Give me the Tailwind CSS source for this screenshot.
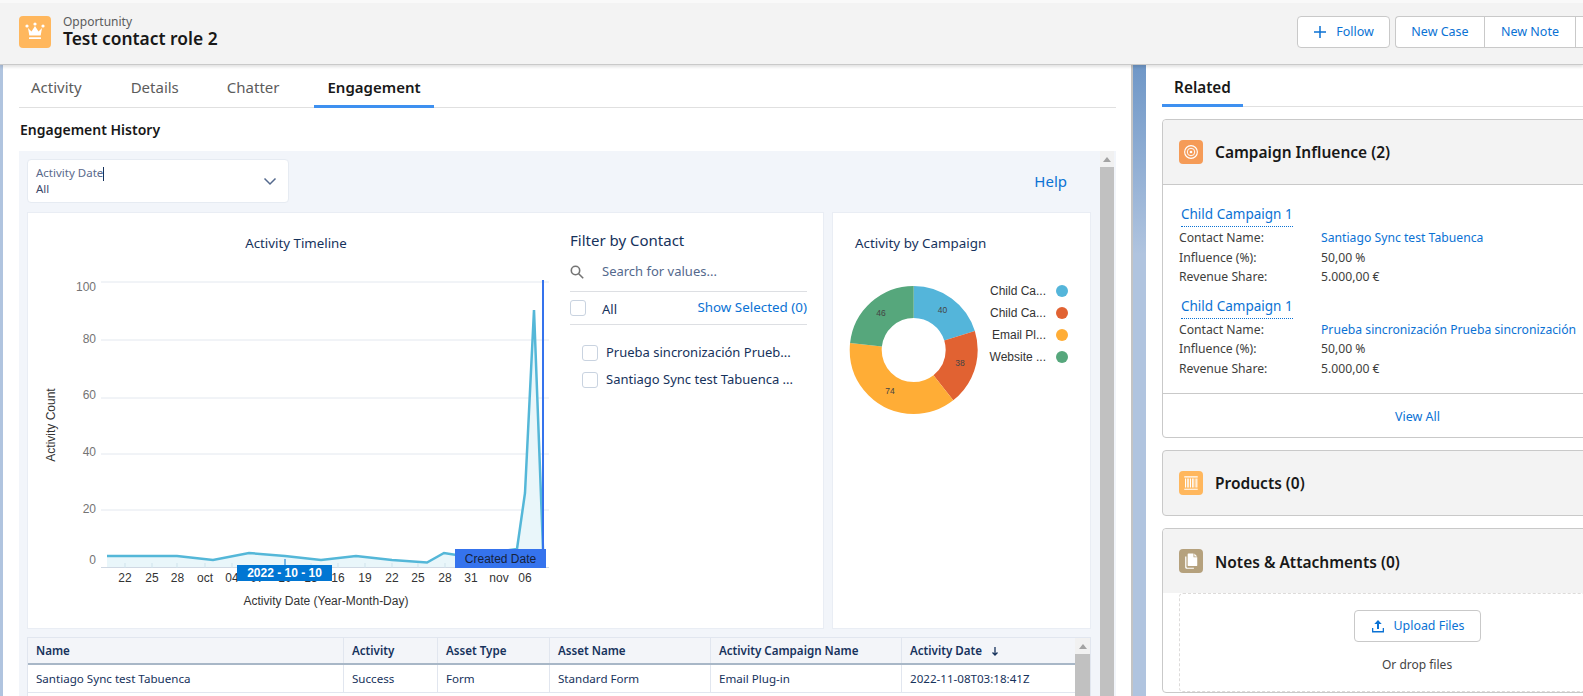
<!DOCTYPE html>
<html>
<head>
<meta charset="utf-8">
<script src="https://cdn.jsdelivr.net/npm/@tailwindcss/browser@4"></script>
</head>
<body class="m-0">
<div class="w-[1583px] h-[696px] overflow-hidden flex flex-col relative bg-[#b0c4df] font-['Noto_Sans',sans-serif] text-[#181818]">
  <!-- Page header -->
  <header class="h-[65px] shrink-0 bg-[#f3f3f3] border-b border-[#c9c9c9] shadow-[inset_0_3px_0_#f9f9f9,0_2px_3px_rgba(0,0,0,0.12)] flex items-center pl-[19px] relative z-10">
    <div class="w-8 h-8 rounded-[4px] bg-[#ffb75d] flex items-center justify-center">
      <svg viewBox="0 0 24 24" class="w-[24px] h-[24px]" fill="#fff"><circle cx="4" cy="6" r="1.6"/><circle cx="12" cy="4" r="1.6"/><circle cx="20" cy="6" r="1.6"/><path d="M5 8l3.5 3.5L12 6l3.5 5.500L19 8l-1.300 7.500H6.300z"/><rect x="6" y="17.300" width="12" height="1.800" rx=".5"/></svg>
    </div>
    <div class="ml-3 mb-[2px] flex flex-col">
      <span class="text-[12px] leading-[16px] text-[#5c5c5c]">Opportunity</span>
      <span class="-mt-[2px] text-[17.4px] leading-[20px] font-semibold">Test contact role 2</span>
    </div>
    <div class="ml-auto -mr-[12px] flex items-center gap-[5px]">
      <button class="w-[93px] h-8 rounded-[4px] bg-white border border-[#c9c9c9] text-[12.500px] text-[#0b72d4] flex items-center justify-center gap-[9px]">
        <svg viewBox="0 0 14 14" class="w-[14px] h-[14px]" stroke="#0b72d4" stroke-width="1.500" fill="none"><path d="M7 1v12M1 7h12"/></svg>Follow
      </button>
      <div class="w-[200px] h-8 rounded-l-[4px] bg-white border border-r-0 border-[#c9c9c9] flex text-[12.500px] text-[#0b72d4]">
        <span class="w-[89px] shrink-0 border-r border-[#c9c9c9] flex items-center justify-center">New Case</span>
        <span class="w-[91px] shrink-0 border-r border-[#c9c9c9] flex items-center justify-center">New Note</span>
      </div>
    </div>
  </header>

  <div class="flex flex-1 min-h-0">
    <!-- Left column -->
    <div class="ml-[3px] w-[1130px] shrink-0 bg-white border-r-2 border-[#c4c4c4] pl-4 flex flex-col min-h-0">
      <nav class="h-[43px] w-[1097px] shrink-0 border-b border-[#e0e0e0] flex text-[15px] text-[#5c5c5c]">
        <span class="ml-3 h-[43px] pt-[2px] flex items-center">Activity</span>
        <span class="ml-[49px] h-[43px] pt-[2px] flex items-center">Details</span>
        <span class="ml-12 h-[43px] pt-[2px] flex items-center">Chatter</span>
        <span class="ml-[35px] h-[43px] pt-[5px] px-[13px] flex items-center font-semibold text-[#181818] border-b-[3px] border-[#3e90f0]">Engagement</span>
      </nav>
      <h2 class="h-[43px] shrink-0 flex items-center text-[14px] font-semibold pl-px">Engagement History</h2>
      <section class="flex flex-1 min-h-0 bg-[#f2f5fa] w-[1097px] overflow-hidden">
        <div class="w-[1081px] shrink-0 pl-[8px]">
          <div class="h-[61px] pt-[8px] pr-[9px] flex justify-between">
            <div class="w-[262px] h-[44px] bg-white rounded-[4px] border border-[#e6ebf2] pl-[8px] pr-[11px] flex items-center justify-between">
              <div class="flex flex-col text-[11.500px] leading-[16px]">
                <span class="text-[#5a6a8c]">Activity Date<span class="inline-block w-px h-[14px] bg-[#16325c] align-middle"></span></span>
                <span class="text-[#3c4a6a]">All</span>
              </div>
              <svg viewBox="0 0 14 14" class="w-[14px] h-[14px]" fill="none" stroke="#54698d" stroke-width="1.500"><path d="M1.500 4.500 7 10l5.500-5.500"/></svg>
            </div>
            <a class="text-[15px] text-[#0b72d4] mr-[24px] mt-[11px] h-[22px] leading-[22px]">Help</a>
          </div>
          <div class="flex gap-2 h-[417px] pr-[9px]">
            <div class="w-[797px] bg-white border border-[#e9edf4] flex">
              <svg viewBox="28 213 531 415" class="w-[531px] h-[415px] shrink-0 font-['Liberation_Sans',sans-serif]">
                <text x="296" y="248" font-size="13.300" fill="#16325c" text-anchor="middle" font-family="Noto Sans">Activity Timeline</text>
                <g stroke="#e3e8ef" stroke-width="1">
                  <path d="M101 282h448M101 340h448M101 398h448M101 454h448M101 510h448"/>
                </g>
                <path d="M101 567.500h448" stroke="#cfd8e3"/>
                <g fill="#747474" font-size="12" text-anchor="end">
                  <text x="96" y="291">100</text><text x="96" y="343">80</text><text x="96" y="399">60</text><text x="96" y="456">40</text><text x="96" y="513">20</text><text x="96" y="564">0</text>
                </g>
                <text transform="translate(55 425) rotate(-90)" font-size="12" fill="#333" text-anchor="middle">Activity Count</text>
                <path d="M107 556 177 556 213 560 249 553 285 556 321 560 356 556 392 560 427 562.500 444 553 463 556 517 549 525 493 534 310 543 549V567H107Z" fill="#e9f6fa"/>
                <path d="M107 556 177 556 213 560 249 553 285 556 321 560 356 556 392 560 427 562.500 444 553 463 556 517 549 525 493 534 310 543 549" fill="none" stroke="#54b7d8" stroke-width="2.500"/>
                <path d="M125 563v5M152 563v5M177 563v5M205 563v5M232 563v5M311 563v5M338 563v5M365 563v5M392 563v5M418 563v5M445 563v5" stroke="#cfe3ec"/>
                <g fill="#333" font-size="12" text-anchor="middle">
                  <text x="125" y="582">22</text><text x="152" y="582">25</text><text x="177.500" y="582">28</text><text x="205" y="582">oct</text><text x="232" y="582">04</text><text x="257" y="582">07</text><text x="285" y="582">10</text><text x="311" y="582">13</text><text x="338" y="582">16</text><text x="365" y="582">19</text><text x="392" y="582">22</text><text x="418" y="582">25</text><text x="445" y="582">28</text><text x="471" y="582">31</text><text x="499" y="582">nov</text><text x="525" y="582">06</text>
                </g>
                <text x="326" y="605" font-size="12" fill="#333" text-anchor="middle">Activity Date (Year-Month-Day)</text>
                <rect x="542" y="280" width="2" height="270" fill="#3573ed"/>
                <rect x="455" y="549" width="91" height="19" fill="#3573ed"/>
                <text x="500.500" y="563" font-size="12" fill="#16223c" text-anchor="middle">Created Date</text>
                <rect x="284.500" y="559" width="1" height="6" fill="#0176d3"/>
                <rect x="237" y="565" width="95" height="16" fill="#0176d3"/>
                <text x="284.500" y="577" font-size="12" font-weight="700" fill="#fff" text-anchor="middle">2022 - 10 - 10</text>
              </svg>
              <div class="w-[237px] ml-[11px] flex flex-col">
                <h3 class="mt-4 text-[15px] leading-[22px] text-[#16325c]">Filter by Contact</h3>
                <div class="h-[41px] pt-[1px] border-b border-[#dddfe3] flex items-center text-[13px] text-[#54698d]">
                  <svg viewBox="0 0 14 14" class="w-[14px] h-[14px]" fill="none" stroke="#747474" stroke-width="1.600"><circle cx="5.500" cy="5.500" r="4.200"/><path d="m8.700 8.700 4.500 4.500"/></svg>
                  <span class="ml-[18px]">Search for values...</span>
                </div>
                <div class="h-[33px] border-b border-[#dddfe3] flex items-center text-[13px]">
                  <span class="w-4 h-4 rounded-[3px] border border-[#c9d3e0] bg-white"></span>
                  <span class="ml-4 mt-[3px] text-[#16325c]">All</span>
                  <a class="ml-auto text-[13.400px] text-[#0b72d4] -mt-[2px]">Show Selected (0)</a>
                </div>
                <div class="mt-[14px] pl-3 flex flex-col text-[13px] text-[#16325c]">
                  <div class="h-[27px] flex items-center"><span class="w-4 h-4 shrink-0 rounded-[3px] border border-[#c9d3e0] bg-white"></span><span class="ml-2 whitespace-nowrap">Prueba sincronización Prueb...</span></div>
                  <div class="h-[27px] flex items-center"><span class="w-4 h-4 shrink-0 rounded-[3px] border border-[#c9d3e0] bg-white"></span><span class="ml-2 whitespace-nowrap">Santiago Sync test Tabuenca ...</span></div>
                </div>
              </div>
            </div>
            <div class="w-[259px] bg-white border border-[#e9edf4]">
              <svg viewBox="832 213 257 415" class="w-[257px] h-[415px] font-['Liberation_Sans',sans-serif]">
                <text x="854" y="248" font-size="13.400" fill="#16325c" font-family="Noto Sans">Activity by Campaign</text>
                <g fill="none" stroke-width="32" transform="rotate(-90 912.700 350)">
                  <circle cx="912.700" cy="350" r="48" pathLength="198" stroke="#54b5da" stroke-dasharray="40 158"/>
                  <circle cx="912.700" cy="350" r="48" pathLength="198" stroke="#e16232" stroke-dasharray="38 160" stroke-dashoffset="-40"/>
                  <circle cx="912.700" cy="350" r="48" pathLength="198" stroke="#ffad36" stroke-dasharray="74 124" stroke-dashoffset="-78"/>
                  <circle cx="912.700" cy="350" r="48" pathLength="198" stroke="#56a77c" stroke-dasharray="46 152" stroke-dashoffset="-152"/>
                </g>
                <g font-size="8.500" fill="#444" text-anchor="middle">
                  <text x="941.600" y="313">40</text><text x="959" y="366">38</text><text x="889" y="394">74</text><text x="880" y="316">46</text>
                </g>
                <g font-size="12" fill="#333" text-anchor="end">
                  <text x="1045" y="295">Child Ca...</text><text x="1045" y="317">Child Ca...</text><text x="1045" y="339">Email Pl...</text><text x="1045" y="361">Website ...</text>
                </g>
                <circle cx="1061" cy="291" r="6" fill="#54b5da"/><circle cx="1061" cy="313" r="6" fill="#e16232"/><circle cx="1061" cy="335" r="6" fill="#ffad36"/><circle cx="1061" cy="357" r="6" fill="#56a77c"/>
              </svg>
            </div>
          </div>
          <!-- Table -->
          <div class="mt-[8px] w-[1064px] flex border border-[#e1e6ef] bg-white text-[11.600px] text-[#16325c]">
            <div class="flex-1">
              <div class="grid grid-cols-[315px_94px_112px_161px_191px_1fr] h-[27px] bg-[#f3f5f9] border-b-2 border-[#a8b7c7] font-semibold">
                <span class="pl-2 flex items-center">Name</span>
                <span class="pl-2 flex items-center border-l border-[#e1e6ef]">Activity</span>
                <span class="pl-2 flex items-center border-l border-[#e1e6ef]">Asset Type</span>
                <span class="pl-2 flex items-center border-l border-[#e1e6ef]">Asset Name</span>
                <span class="pl-2 flex items-center border-l border-[#e1e6ef]">Activity Campaign Name</span>
                <span class="pl-2 flex items-center gap-2 border-l border-[#e1e6ef]">Activity Date<svg viewBox="0 0 10 10" class="w-[10px] h-[10px]" fill="none" stroke="#16325c" stroke-width="1.300"><path d="M5 1v8M2.500 6.500 5 9l2.500-2.500"/></svg></span>
              </div>
              <div class="grid grid-cols-[315px_94px_112px_161px_191px_1fr] h-[28px] border-b border-[#e1e6ef]">
                <span class="pl-2 flex items-center">Santiago Sync test Tabuenca</span>
                <span class="pl-2 flex items-center border-l border-[#e1e6ef]">Success</span>
                <span class="pl-2 flex items-center border-l border-[#e1e6ef]">Form</span>
                <span class="pl-2 flex items-center border-l border-[#e1e6ef]">Standard Form</span>
                <span class="pl-2 flex items-center border-l border-[#e1e6ef]">Email Plug-in</span>
                <span class="pl-2 flex items-center border-l border-[#e1e6ef]">2022-11-08T03:18:41Z</span>
              </div>
              <div class="h-[27px]"></div>
            </div>
            <div class="w-[15px] shrink-0 bg-[#f1f1f1] flex flex-col items-center">
              <span class="mt-[6px] w-0 h-0 border-x-[4px] border-x-transparent border-b-[5px] border-b-[#a3a3a3]"></span>
              <span class="mt-[5px] w-full flex-1 bg-[#c1c1c1]"></span>
            </div>
          </div>
        </div>
        <div class="w-[14px] shrink-0 bg-[#f1f1f1] flex flex-col items-center">
          <span class="mt-[6px] w-0 h-0 border-x-[4px] border-x-transparent border-b-[5px] border-b-[#a3a3a3]"></span>
          <span class="mt-[5px] w-full flex-1 bg-[#c1c1c1]"></span>
        </div>
      </section>
    </div>
    <!-- Wallpaper strip -->
    <div class="w-[13px] shrink-0 bg-gradient-to-b from-[#6f97c7] to-[#b0c4df] to-30%"></div>
    <!-- Right column -->
    <div class="flex-1 min-w-0 bg-white pl-4 flex flex-col gap-[12px] overflow-hidden">
      <nav class="h-[42px] shrink-0 border-b border-[#e0e0e0] w-[500px] flex">
        <span class="h-[42px] w-[81px] pt-[5px] flex items-center justify-center text-[15.300px] font-semibold border-b-[3px] border-[#3e90f0]">Related</span>
      </nav>
      <article class="w-[500px] h-[319px] shrink-0 rounded-[4px] border border-[#c9c9c9] flex flex-col">
        <div class="h-[65px] shrink-0 bg-[#f3f3f3] border-b border-[#c9c9c9] rounded-t-[4px] pl-4 flex items-center">
          <span class="w-6 h-6 rounded-[4px] bg-[#f59b57] flex items-center justify-center"><svg viewBox="0 0 24 24" class="w-[18px] h-[18px]" fill="none" stroke="#fff"><circle cx="12" cy="12" r="8.500" stroke-width="1.500"/><circle cx="12" cy="12" r="5" stroke-width="1.300"/><circle cx="12" cy="12" r="1.800" fill="#fff" stroke="none"/></svg></span>
          <h3 class="ml-3 mt-[2px] text-[15.500px] font-semibold">Campaign Influence (2)</h3>
        </div>
        <div class="h-[209px] shrink-0 border-b border-[#c9c9c9] pl-4 pt-[17px] text-[12.200px] leading-[19.500px] text-[#3e3e3c]">
          <a class="inline-block ml-[2px] text-[#0b72d4] text-[13.500px] leading-[24px] border-b border-dotted border-[#0b72d4]">Child Campaign 1</a>
          <div class="grid grid-cols-[142px_1fr] mt-[1px] mb-[7px]">
            <span>Contact Name:</span><a class="text-[#0b72d4]">Santiago Sync test Tabuenca</a>
            <span>Influence (%):</span><span>50,00 %</span>
            <span>Revenue Share:</span><span>5.000,00 €</span>
          </div>
          <a class="inline-block ml-[2px] text-[#0b72d4] text-[13.500px] leading-[24px] border-b border-dotted border-[#0b72d4]">Child Campaign 1</a>
          <div class="grid grid-cols-[142px_1fr] mt-[1px]">
            <span>Contact Name:</span><a class="text-[#0b72d4]">Prueba sincronización Prueba sincronización</a>
            <span>Influence (%):</span><span>50,00 %</span>
            <span>Revenue Share:</span><span>5.000,00 €</span>
          </div>
        </div>
        <div class="flex-1 flex items-center pt-[3px] pl-[232px] text-[12.500px] text-[#0b72d4]">View All</div>
      </article>
      <article class="w-[500px] h-[66px] shrink-0 rounded-[4px] border border-[#c9c9c9] bg-[#f3f3f3] pl-4 flex items-center">
        <span class="w-6 h-6 rounded-[4px] bg-[#ffb75d] flex items-center justify-center"><svg viewBox="0 0 24 24" class="w-[18px] h-[18px]" fill="#fff"><path d="M3 3h18v1.500H3zM4 6h1.500v12H4zM7 6h2v12H7zM10.500 6h1.500v12h-1.500zM13.500 6h2v12h-2zM17 6h1v12h-1zM19 6h1.500v12H19zM3 19.500h18V21H3z"/></svg></span>
        <h3 class="ml-3 mt-[2px] text-[15.500px] font-semibold">Products (0)</h3>
      </article>
      <article class="w-[500px] h-[165px] shrink-0 rounded-[4px] border border-[#c9c9c9] flex flex-col">
        <div class="h-[64px] shrink-0 bg-[#f3f3f3] rounded-t-[4px] pl-4 flex items-center">
          <span class="w-6 h-6 rounded-[4px] bg-[#b5a17d] flex items-center justify-center"><svg viewBox="0 0 24 24" class="w-[20px] h-[20px]" fill="#fff"><path d="M9 3h6v4.500h4.500V17a1 1 0 0 1-1 1H9a1 1 0 0 1-1-1V4a1 1 0 0 1 1-1zM16 3l3.500 3.500H16z"/><path d="M6.500 6.500V19a1 1 0 0 0 1 1h8v1.200H6.300a1.300 1.300 0 0 1-1.300-1.300V6.500z"/></svg></span>
          <h3 class="ml-3 mt-[3px] text-[15.500px] font-semibold">Notes &amp; Attachments (0)</h3>
        </div>
        <div class="flex-1 ml-4 border border-dashed border-[#dddbda] rounded-[4px] flex flex-col pl-[174px] pt-[16px]">
          <button class="w-[127px] h-8 rounded-[4px] bg-white border border-[#c9c9c9] text-[12.400px] text-[#0b72d4] flex items-center justify-center gap-[9px]">
            <svg viewBox="0 0 14 14" class="w-[14px] h-[14px]" fill="#0b72d4"><path d="M7 1 3.300 5h2.700v5h2V5h2.700z"/><path d="M1 9h1.300v3h9.400V9H13v4.500H1z"/></svg>Upload Files
          </button>
          <span class="mt-[14px] ml-[28px] text-[12px] leading-[18px] text-[#444]">Or drop files</span>
        </div>
      </article>
    </div>
  </div>
</div>
</body>
</html>
